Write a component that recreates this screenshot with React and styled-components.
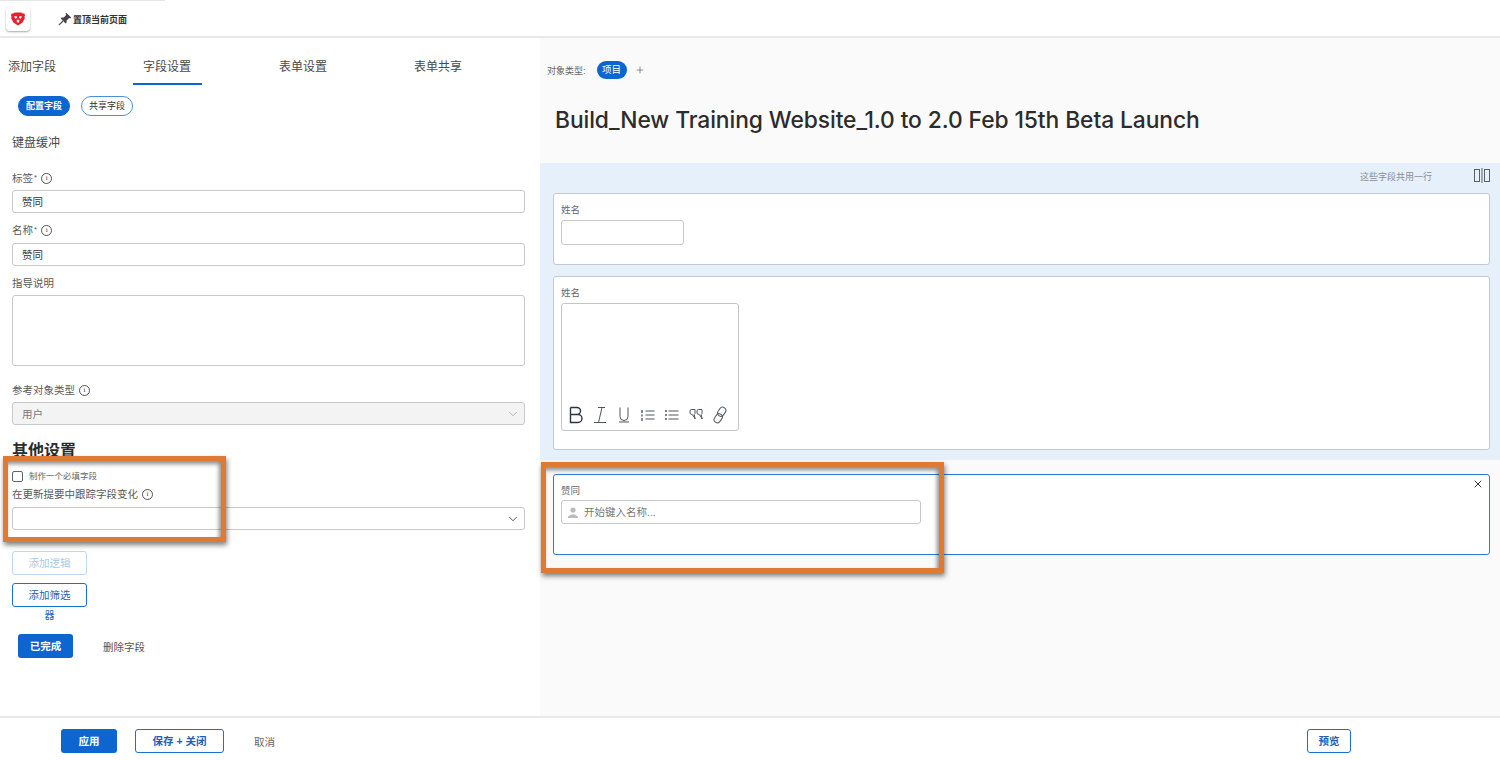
import React from 'react'
import styled, { createGlobalStyle } from 'styled-components'
import { ChevronDown, X, Plus } from 'lucide-react'

const GlobalStyle = createGlobalStyle`
  html, body { margin: 0; padding: 0; background: #fff; }
  body {
    font-family: "Liberation Sans", "Noto Sans CJK SC", sans-serif;
    color: #3b3b3b;
  }
`

const Page = styled.div`
  position: relative;
  width: 1500px;
  height: 760px;
  overflow: hidden;
  display: flex;
  flex-direction: column;
`

const TopEdge = styled.div`
  width: 165px;
  height: 1px;
  flex: none;
  background: #e6e6e6;
`

const TopBar = styled.header`
  height: 37px;
  flex: none;
  display: flex;
  align-items: center;
  gap: 28px;
  padding: 1px 0 0 6px;
  box-sizing: border-box;
  border-bottom: 2px solid #e8e8e8;
  background: #fff;
`

const LogoButton = styled.div`
  width: 24px;
  height: 24px;
  border-radius: 4px;
  background: #fff;
  box-shadow: 0 1px 2px rgba(0, 0, 0, 0.35);
  display: flex;
  align-items: center;
  justify-content: center;
`

const PinLabel = styled.div`
  display: flex;
  align-items: center;
  gap: 1px;
  font-size: 9px;
  font-weight: 700;
  color: #333;
`

const Main = styled.main`
  flex: 1;
  display: flex;
  min-height: 0;
`

const LeftPanel = styled.section`
  width: 540px;
  flex: none;
  background: #fff;
  padding: 0 15px 0 12px;
  box-sizing: border-box;
`

const Tabs = styled.div`
  display: flex;
  gap: 67px;
  height: 47px;
  margin: 0 0 11px -12px;
`

const Tab = styled.div`
  height: 47px;
  box-sizing: border-box;
  padding: 21px ${p => (p.$first ? '10px' : '11px')} 0 ${p => (p.$first ? '8px' : '10px')};
  font-size: 12px;
  line-height: 17px;
  color: #4a4a4a;
  border-bottom: 2px solid ${p => (p.$active ? '#0d66d0' : 'transparent')};
  &:last-child { margin-left: -1px; }
`

const Pills = styled.div`
  display: flex;
  gap: 11px;
  margin-left: 6px;
`

const Pill = styled.div`
  height: 20px;
  box-sizing: border-box;
  padding: 0 7px;
  border-radius: 10px;
  font-size: 9px;
  line-height: 18px;
  font-weight: ${p => (p.$on ? 700 : 400)};
  color: ${p => (p.$on ? '#fff' : '#333')};
  background: ${p => (p.$on ? '#0d66d0' : '#fff')};
  border: 1px solid ${p => (p.$on ? '#0d66d0' : '#4b8fe0')};
`

const SectionName = styled.div`
  font-size: 12px;
  line-height: 17px;
  margin-top: 19px;
  color: #4a4a4a;
`

const FieldLabel = styled.div`
  display: flex;
  align-items: center;
  gap: 4px;
  font-size: 10.5px;
  line-height: 14px;
  color: #5a5a5a;
  margin-top: ${p => p.$top || 0}px;
  margin-bottom: ${p => p.$bottom || 5}px;
`

const Sup = styled.span`
  font-size: 8px;
  margin-left: -3px;
  align-self: flex-start;
`

const InfoDot = styled.span`
  width: 9px;
  height: 9px;
  border: 1px solid #555;
  border-radius: 50%;
  font-size: 7px;
  line-height: 9px;
  text-align: center;
  color: #444;
  font-family: "Liberation Serif", serif;
`

const Input = styled.div`
  height: ${p => p.$h || 23}px;
  width: ${p => (p.$w ? `${p.$w}px` : 'auto')};
  box-sizing: border-box;
  border: 1px solid #c9c9c9;
  border-radius: 3px;
  background: ${p => (p.$disabled ? '#f3f3f3' : '#fff')};
  padding: 0 ${p => (p.$select ? '4px' : '9px')} 0 ${p => p.$left || 9}px;
  font-size: 10.5px;
  line-height: 22px;
  color: ${p => (p.$disabled ? '#777' : '#333')};
  display: flex;
  align-items: center;
  justify-content: space-between;
`

const OtherTitle = styled.div`
  font-size: 16px;
  line-height: 20px;
  font-weight: 700;
  color: #2c2c2c;
  margin-top: 16px;
`

const CheckRow = styled.label`
  display: flex;
  align-items: center;
  gap: 6px;
  font-size: 8.5px;
  line-height: 12px;
  color: #666;
  margin-top: 9px;
`

const CheckBox = styled.span`
  width: 9px;
  height: 9px;
  border: 1px solid #666;
  border-radius: 2px;
  background: #fff;
`

const OutlineButton = styled.div`
  width: ${p => p.$w}px;
  height: 24px;
  box-sizing: border-box;
  border: 1px solid ${p => (p.$muted ? '#bcd8f5' : '#1a6fd4')};
  border-radius: 3px;
  background: #fff;
  font-size: 10.5px;
  line-height: 22px;
  font-weight: ${p => (p.$bold ? 700 : 400)};
  text-align: center;
  color: ${p => (p.$muted ? '#a9c8ec' : '#1f5fb8')};
  margin-top: ${p => p.$top || 0}px;
  flex: none;
`

const Overflowed = styled.div`
  width: 75px;
  text-align: center;
  font-size: 10px;
  line-height: 12px;
  color: #1f66c4;
  margin-top: 3px;
`

const DoneRow = styled.div`
  display: flex;
  align-items: center;
  gap: 30px;
  margin: 12px 0 0 6px;
`

const PrimaryButton = styled.div`
  width: ${p => p.$w}px;
  height: 24px;
  border-radius: 3px;
  background: #0d66d0;
  color: #fff;
  font-size: 10.5px;
  font-weight: 700;
  line-height: 24px;
  text-align: center;
  flex: none;
`

const PlainAction = styled.div`
  font-size: 10.5px;
  color: #555;
`

const RightPanel = styled.section`
  flex: 1;
  background: #fafafa;
  display: flex;
  flex-direction: column;
`

const ObjectRow = styled.div`
  display: flex;
  align-items: center;
  height: 18px;
  margin: 23px 0 0 7px;
  font-size: 9px;
  color: #666;
`

const ObjectPill = styled.div`
  width: 30px;
  height: 18px;
  margin-left: 11px;
  border-radius: 9px;
  background: #0d66d0;
  color: #fff;
  font-size: 9.5px;
  line-height: 18px;
  text-align: center;
`

const AddMark = styled.div`
  display: flex;
  margin-left: 8px;
  color: #555;
`

const Title = styled.h1`
  margin: 26px 0 0 15px;
  font-family: "Inter", sans-serif;
  font-size: 22.8px;
  line-height: 30px;
  font-weight: 500;
  letter-spacing: -0.08px;
  color: #2c2c2c;
  height: 30px;
  white-space: nowrap;
`

const Band = styled.div`
  margin-top: 28px;
  height: 297px;
  box-sizing: border-box;
  background: #e6f0fa;
  padding: 6px 10px 0 13px;
  display: flex;
  flex-direction: column;
`

const BandHead = styled.div`
  height: 14px;
  margin-bottom: 10px;
  display: flex;
  justify-content: flex-end;
  align-items: center;
  gap: 42px;
  font-size: 9px;
  color: #8a8f95;
`

const Card = styled.div`
  position: relative;
  height: ${p => p.$h}px;
  box-sizing: border-box;
  background: #fff;
  border: 1px solid ${p => (p.$active ? '#2a7bd8' : '#c4c9cf')};
  border-radius: 3px;
  padding: 9px 7px 0;
  margin-bottom: ${p => p.$mb || 0}px;
`

const CardLabel = styled.div`
  font-size: 9.5px;
  line-height: 13px;
  color: #666;
  margin-bottom: ${p => p.$mb || 4}px;
`

const Editor = styled.div`
  width: 178px;
  height: 128px;
  box-sizing: border-box;
  border: 1px solid #c4c4c4;
  border-radius: 3px;
  padding: 0 2px 6px;
  display: flex;
  align-items: flex-end;
`

const ToolSlot = styled.svg`
  width: 24px;
  height: 18px;
  flex: none;
  fill: none;
  stroke: ${p => p.$dark ? '#2b3642' : '#4d5762'};
  stroke-width: ${p => p.$dark ? 1.4 : 1};
`

const CloseMark = styled.div`
  position: absolute;
  top: 3px;
  right: 5px;
  display: flex;
  color: #333;
`

const Placeholder = styled.div`
  display: flex;
  align-items: center;
  gap: 6px;
  color: #777;
`

const CardArea = styled.div`
  padding: 14px 10px 0 13px;
`

const Footer = styled.footer`
  height: 44px;
  flex: none;
  box-sizing: border-box;
  border-top: 2px solid #e8e8e8;
  background: #fff;
  display: flex;
  align-items: center;
  padding: 4px 149px 0 61px;
  gap: 18px;
`

const CancelText = styled.div`
  font-size: 10.5px;
  color: #666;
  margin-left: 12px;
  flex: 1;
`

const Highlight = styled.div`
  position: absolute;
  left: ${p => p.$x}px;
  top: ${p => p.$y}px;
  width: ${p => p.$w}px;
  height: ${p => p.$h}px;
  box-sizing: border-box;
  border: 5px solid #df7a33;
  box-shadow: 1px 3px 5px rgba(0, 0, 0, 0.5), inset -2px 3px 4px rgba(0, 0, 0, 0.45);
  pointer-events: none;
`

function BraveLogo() {
  return (
    <svg width="14" height="14" viewBox="0 0 14 14">
      <path d="M3.800.4h6.400l1.600 1.200 1.600-.2.600 1.800-.5 1.400.3 1.600-2.200 4.200L7 13.600 2.400 10.400.2 6.200l.3-1.600L0 3.200l.6-1.800 1.600.2z" fill="#e5212c" />
      <path d="M3 4.600 5.400 4 6.200 6 4.400 6.800zM11 4.600 8.600 4 7.800 6 9.600 6.800zM5.600 8.400 7 7.400l1.400 1L8.200 9.800 7 11 5.800 9.800z" fill="#fff" />
    </svg>
  )
}

function PinIcon() {
  return (
    <svg width="14" height="14" viewBox="0 0 14 14">
      <path d="M8.2.8 13.2 5.6 12.2 6.4 11.2 6 8.6 8.4 8.6 10.6 7.6 11.4 2.8 6.4 3.6 5.4 5.8 5.4 8.2 3 7.6 1.6z" fill="#444" />
      <path d="M5 9 .8 13.2" stroke="#555" strokeWidth="1.2" />
    </svg>
  )
}

function SplitIcon() {
  return (
    <svg width="16" height="16" viewBox="0 0 16 16" fill="none" stroke="#56606b" strokeWidth="1">
      <rect x="0.5" y="1.5" width="5" height="12" />
      <rect x="10.5" y="1.5" width="5" height="12" />
      <path d="M8 0v15" />
    </svg>
  )
}

function PersonIcon() {
  return (
    <svg width="10" height="11" viewBox="0 0 10 11" fill="#bdbdbd">
      <circle cx="5" cy="3" r="2.6" />
      <path d="M0 11V9.400L3.400 7.600h3.200L10 9.400V11z" />
    </svg>
  )
}

// toolbar glyphs, each in a 24x18 slot
function EditorTools() {
  return (
    <>
      <ToolSlot $dark viewBox="0 0 24 18">
        <path d="M6.500 1.500v15h7.500a4 4 0 0 0 0-8H6.500M6.500 8.500H13a3.500 3.500 0 0 0 0-7H6.500" />
      </ToolSlot>
      <ToolSlot viewBox="0 0 24 18">
        <path d="M10 1.500h7M14 1.500 10.500 16.500M6 16.500h12" />
      </ToolSlot>
      <ToolSlot viewBox="0 0 24 18">
        <path d="M8 1.500v9a4 4 0 0 0 8 0v-9M7 16h10" />
      </ToolSlot>
      <ToolSlot viewBox="0 0 24 18">
        <path d="M9.500 5h9M9.500 9h9M9.500 13h9" />
        <path d="M6 4v3M6 8.500v2M6 12v3" strokeWidth="1.4" />
      </ToolSlot>
      <ToolSlot viewBox="0 0 24 18">
        <path d="M8.500 5h10M8.500 9h10M8.500 13h10" />
        <path d="M5 5h2M5 9h2M5 13h2" strokeWidth="1.3" />
      </ToolSlot>
      <ToolSlot viewBox="0 0 24 18">
        <path d="M6 5a1.500 1.500 0 0 1 1.500-1.500h3.500v4.200l-.8.800 1 4.500-2.400-4L6 7.500z" />
        <path d="M13 5a1.500 1.500 0 0 1 1.500-1.500H18v4.200l-.8.800 1 4.500-2.400-4L13 7.500z" />
      </ToolSlot>
      <ToolSlot viewBox="0 0 24 18">
        <rect x="10.500" y="1" width="6.500" height="9.500" rx="3.200" transform="rotate(35 13.700 5.700)" />
        <rect x="7" y="7.500" width="6.500" height="9.500" rx="3.200" transform="rotate(35 10.200 12.200)" />
      </ToolSlot>
    </>
  )
}

function Info() {
  return <InfoDot>i</InfoDot>
}

export default function App() {
  return (
    <Page>
      <GlobalStyle />
      <TopEdge />
      <TopBar>
        <LogoButton><BraveLogo /></LogoButton>
        <PinLabel><PinIcon />置顶当前页面</PinLabel>
      </TopBar>
      <Main>
        <LeftPanel>
          <Tabs>
            <Tab $first>添加字段</Tab>
            <Tab $active>字段设置</Tab>
            <Tab>表单设置</Tab>
            <Tab>表单共享</Tab>
          </Tabs>
          <Pills>
            <Pill $on>配置字段</Pill>
            <Pill>共享字段</Pill>
          </Pills>
          <SectionName>键盘缓冲</SectionName>
          <FieldLabel $top={19}>标签<Sup>*</Sup><Info /></FieldLabel>
          <Input>赞同</Input>
          <FieldLabel $top={10} $bottom={6}>名称<Sup>*</Sup><Info /></FieldLabel>
          <Input>赞同</Input>
          <FieldLabel $top={10}>指导说明</FieldLabel>
          <Input $h={71} />
          <FieldLabel $top={17}>参考对象类型<Info /></FieldLabel>
          <Input $disabled $select>用户<ChevronDown size={14} strokeWidth={1} color="#888" /></Input>
          <OtherTitle>其他设置</OtherTitle>
          <CheckRow><CheckBox />制作一个必填字段</CheckRow>
          <FieldLabel $top={5} $bottom={6}>在更新提要中跟踪字段变化<Info /></FieldLabel>
          <Input $select><span /><ChevronDown size={14} strokeWidth={1.5} color="#444" /></Input>
          <OutlineButton $w={75} $muted $top={21}>添加逻辑</OutlineButton>
          <OutlineButton $w={75} $top={8}>添加筛选</OutlineButton>
          <Overflowed>器</Overflowed>
          <DoneRow>
            <PrimaryButton $w={55}>已完成</PrimaryButton>
            <PlainAction>删除字段</PlainAction>
          </DoneRow>
        </LeftPanel>
        <RightPanel>
          <ObjectRow>
            对象类型:
            <ObjectPill>项目</ObjectPill>
            <AddMark><Plus size={10} strokeWidth={1.5} /></AddMark>
          </ObjectRow>
          <Title>Build_New Training Website_1.0 to 2.0 Feb 15th Beta Launch</Title>
          <Band>
            <BandHead>
              这些字段共用一行
              <SplitIcon />
            </BandHead>
            <Card $h={72} $mb={11}>
              <CardLabel>姓名</CardLabel>
              <Input $w={123} $h={25} />
            </Card>
            <Card $h={174}>
              <CardLabel>姓名</CardLabel>
              <Editor><EditorTools /></Editor>
            </Card>
          </Band>
          <CardArea>
            <Card $h={81} $active>
              <CloseMark><X size={12} strokeWidth={2} /></CloseMark>
              <CardLabel $mb={3}>赞同</CardLabel>
              <Input $w={360} $h={24} $left={6}>
                <Placeholder><PersonIcon />开始键入名称...</Placeholder>
              </Input>
            </Card>
          </CardArea>
        </RightPanel>
      </Main>
      <Footer>
        <PrimaryButton $w={56}>应用</PrimaryButton>
        <OutlineButton $w={89} $bold>保存 + 关闭</OutlineButton>
        <CancelText>取消</CancelText>
        <OutlineButton $w={44} $bold>预览</OutlineButton>
      </Footer>
      <Highlight $x={3} $y={456} $w={223} $h={86} />
      <Highlight $x={541} $y={462} $w={403} $h={111} />
    </Page>
  )
}
